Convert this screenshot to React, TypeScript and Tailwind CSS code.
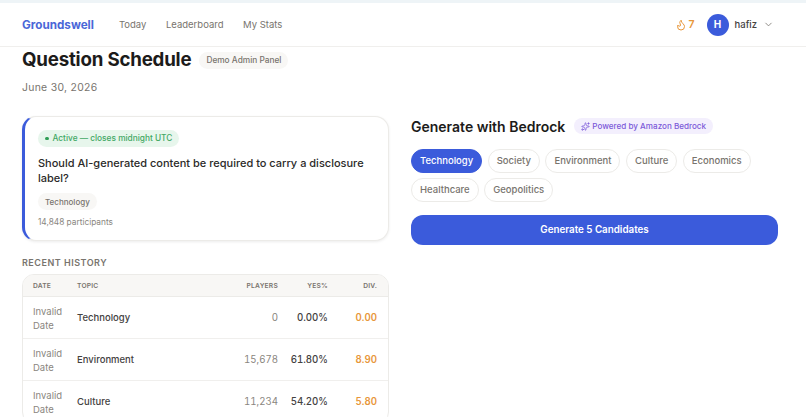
import React from "react";
import { Flame, ChevronDown, Sparkles } from "lucide-react";

const rows = [
  { topic: "Technology", players: "0", yes: "0.00%", div: "0.00" },
  { topic: "Environment", players: "15,678", yes: "61.80%", div: "8.90" },
  { topic: "Culture", players: "11,234", yes: "54.20%", div: "5.80" },
];
const row1 = ["Technology", "Society", "Environment", "Culture", "Economics"];
const row2 = ["Healthcare", "Geopolitics"];
const gridCols = "grid grid-cols-[44px_1fr_70px_50px_49px] pr-[11px] pl-[10px]";

function Chip({ label }: { label: string }) {
  const active = label === "Technology";
  return (
    <span
      className={
        active
          ? "flex h-[24px] items-center rounded-full border border-[#3b5bdb] bg-[#3b5bdb] px-[8px] text-[9.5px] font-medium text-white"
          : "flex h-[24px] items-center rounded-full border border-[#ecebe8] bg-white px-[8px] text-[9.5px] font-medium text-[#78746e]"
      }
    >
      {label}
    </span>
  );
}

export default function App() {
  return (
    <div className="h-[417px] w-[806px] overflow-hidden bg-white font-['Inter',sans-serif] text-[#1c1b1a]">
      <header className="flex h-[47px] items-center justify-between border-t-[3px] border-b border-t-[#eef4f7] border-b-[#f0efed] pr-[32px] pl-[22px]">
        <div className="mt-[2px] flex items-center">
          <span className="text-[11.7px] font-bold text-[#4a67d8]">Groundswell</span>
          <nav className="ml-[25px] flex gap-[19.5px] text-[9.5px] font-normal text-[#78746e]">
            <span>Today</span>
            <span>Leaderboard</span>
            <span>My Stats</span>
          </nav>
        </div>
        <div className="flex items-center">
          <Flame className="h-[12px] w-[12px] text-[#e8973a]" strokeWidth={2} />
          <span className="mt-[1px] ml-[1px] text-[10.5px] font-semibold text-[#e8973a]">7</span>
          <span className="ml-[12px] flex h-[22px] w-[22px] items-center justify-center rounded-full bg-[#3b5bdb] text-[10px] font-bold text-white">
            H
          </span>
          <span className="mt-[2px] ml-[6px] text-[9.5px] font-medium text-[#44423f]">hafiz</span>
          <ChevronDown className="ml-[6px] h-[11px] w-[11px] text-[#78746e]" strokeWidth={1.75} />
        </div>
      </header>

      <main className="pr-[28px] pl-[22px]">
        <div className="flex h-[27px] items-center">
          <h1 className="text-[18.7px] font-bold tracking-[-0.2px] text-[#1c1b1a]">Question Schedule</h1>
          <span className="ml-[8px] rounded-full bg-[#f8f7f5] px-[7px] py-[2px] text-[8.3px] font-medium text-[#78746e]">
            Demo Admin Panel
          </span>
        </div>
        <p className="mt-[6px] text-[10.4px] leading-[16px] tracking-[0.3px] text-[#78746e]">June 30, 2026</p>

        <div className="mt-[20px] grid grid-cols-2 gap-[22px]">
          <section>
            <div className="h-[125px] rounded-[14px] border border-l-[3px] border-[#ecebe8] border-l-[#3b5bdb] bg-white pt-[13px] pr-[14px] pl-[13px] shadow-[0_1px_3px_rgba(0,0,0,0.08)]">
              <span className="flex h-[17px] w-fit items-center rounded-full bg-[#e7f6ec] px-[7px] text-[8.3px] font-medium text-[#43a865]">
                <span className="mr-[4px] h-[3.5px] w-[3.5px] rounded-full bg-[#2f9e55]" />
                Active — closes midnight UTC
              </span>
              <p className="mt-[9px] text-[11px] leading-[15px] font-medium text-[#2b2a28]">
                Should AI-generated content be required to carry a disclosure label?
              </p>
              <span className="mt-[7px] flex h-[17px] w-fit items-center rounded-full bg-[#f8f7f5] px-[7px] text-[8px] font-medium text-[#78746e]">
                Technology
              </span>
              <p className="mt-[6px] text-[8.3px] leading-[12px] text-[#8a8680]">14,848 participants</p>
            </div>

            <h2 className="mt-[16px] text-[9px] leading-[12px] font-semibold tracking-[0.5px] text-[#78746e]">
              RECENT HISTORY
            </h2>
            <div className="mt-[5px] overflow-hidden rounded-[12px] border border-[#ecebe8]">
              <div className={`${gridCols} h-[22px] items-center border-b border-[#ecebe8] bg-[#f8f7f5] pt-[2px] text-[6.7px] font-semibold tracking-[0.2px] text-[#78746e]`}>
                <span>DATE</span>
                <span>TOPIC</span>
                <span className="text-right">PLAYERS</span>
                <span className="text-right">YES%</span>
                <span className="text-right">DIV.</span>
              </div>
              {rows.map((r) => (
                <div key={r.topic} className={`${gridCols} h-[42px] items-center border-b border-[#f0efed] pt-[2px] text-[9.5px]`}>
                  <span className="w-[34px] leading-[14px] text-[#8a8680]">Invalid Date</span>
                  <span className="font-medium text-[#44423f]">{r.topic}</span>
                  <span className="text-right text-[9.7px] text-[#8a8680] tabular-nums">{r.players}</span>
                  <span className="text-right text-[9.7px] font-medium text-[#44423f] tabular-nums">{r.yes}</span>
                  <span className="text-right text-[9.7px] font-semibold text-[#e8973a] tabular-nums">{r.div}</span>
                </div>
              ))}
            </div>
          </section>

          <section>
            <div className="mt-[1px] flex h-[18px] items-center">
              <h2 className="text-[14px] font-semibold text-[#1c1b1a]">Generate with Bedrock</h2>
              <span className="ml-[9px] flex h-[16px] items-center rounded-full bg-[#f3effd] px-[7px] text-[8.1px] font-medium text-[#7c5ad9]">
                <Sparkles className="mr-[2px] h-[9px] w-[9px]" strokeWidth={2} />
                Powered by Amazon Bedrock
              </span>
            </div>
            <div className="mt-[14px] flex gap-[5.5px]">
              {row1.map((c) => (
                <Chip key={c} label={c} />
              ))}
            </div>
            <div className="mt-[5px] flex gap-[5.5px]">
              {row2.map((c) => (
                <Chip key={c} label={c} />
              ))}
            </div>
            <button className="mt-[13px] h-[30px] w-full rounded-[12px] bg-[#3b5bdb] text-[9.8px] font-semibold text-white">
              Generate 5 Candidates
            </button>
          </section>
        </div>
      </main>
    </div>
  );
}
